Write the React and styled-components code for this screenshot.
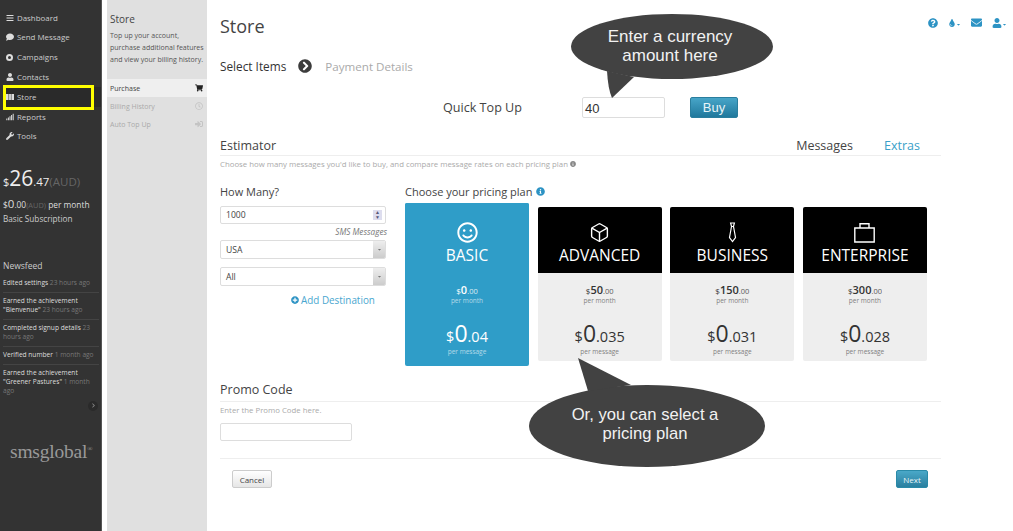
import React from "react";
import styled, { createGlobalStyle } from "styled-components";
import { FaBars, FaComment, FaUser, FaSignal, FaWrench, FaShoppingCart, FaRegClock, FaSignInAlt, FaQuestionCircle, FaTint, FaEnvelope, FaInfoCircle, FaChevronCircleRight, FaPlusCircle, FaChevronRight, FaCaretDown, FaRegSmile } from "react-icons/fa";
import { Box } from "lucide-react";

const Global = createGlobalStyle`
  html, body { margin: 0; padding: 0; background: #fff; overflow: hidden; }
  body { font-family: "Open Sans", "Liberation Sans", sans-serif; }
  * { box-sizing: border-box; }
`;
const Page = styled.div`display: flex; width: 1013px; height: 531px; overflow: hidden; position: relative;`;
const Sidebar = styled.aside`width: 102px; flex: none; background: #333; border-right: 1px solid #555; color: #ddd; padding: 7.8px 0 0 3px; display: flex; flex-direction: column;`;
const NavList = styled.nav`display: flex; flex-direction: column;`;
const NavRow = styled.div`position: relative; height: 19.8px; display: flex; align-items: center; gap: 3px; padding-left: 3px; font-size: 7.9px; color: #ccc; background: ${p => p.$active ? "#2a2a2a" : "transparent"}; svg { width: 8px; height: 8px; flex: none; color: #ddd; }`;
const Highlight = styled.span`position: absolute; left: 0; top: -2px; width: 91px; height: 25px; border: 3px solid #ff0; pointer-events: none;`;
const Ring = styled.span`width: 7px; height: 7px; margin: 0 1px 0 0; flex: none; border: 2px solid #ddd; border-radius: 50%;`;
const Balance = styled.div`margin-top: 20.2px; color: #eee; font-size: 11px; line-height: 22px; white-space: nowrap; b { font-weight: 400; font-size: 21px; } small { font-size: 11.5px; } em { font-style: normal; font-size: 11.5px; color: #666; }`;
const Monthly = styled.div`font-size: 8.4px; line-height: 14px; margin-top: 4px; color: #ddd; white-space: nowrap; b { font-weight: 400; font-size: 11.5px; } em { font-style: normal; color: #666; font-size: 7.4px; } small { font-size: 7px; }`;
const SubLabel = styled.div`font-size: 8.2px; line-height: 14px; color: #ccc;`;
const FeedTitle = styled.div`font-size: 8.5px; color: #ccc; margin-top: 34px; margin-bottom: 4px;`;
const FeedItem = styled.div`font-size: 6.6px; line-height: 9px; color: #ddd; padding: 3px 0 5.2px; border-bottom: ${p => p.$last ? "none" : "1px solid #444"}; margin-right: 2px; span { color: #777; }`;
const Toggle = styled.div`align-self: flex-end; width: 10px; height: 10px; margin: 0 3px 0 0; border-radius: 50%; background: #2a2a2a; color: #888; display: flex; align-items: center; justify-content: center; svg { width: 5px; height: 5px; }`;
const Logo = styled.div`font-family: "Liberation Serif", serif; color: #999; font-size: 19.5px; margin: 30px 0 0 7px; white-space: nowrap; letter-spacing: -0.2px; sup { font-size: 7px; }`;
const SubNav = styled.aside`width: 100px; margin-left: 5px; flex: none; background: #e0e0e0; padding-top: 13px; display: flex; flex-direction: column;`;
const SubTitle = styled.div`font-size: 10px; color: #444; padding: 0 3px; line-height: 13px;`;
const SubText = styled.p`font-size: 7px; line-height: 12px; color: #555; margin: 4px 0 13px; padding: 0 3px; white-space: nowrap;`;
const SubRow = styled.div`height: 18px; display: flex; align-items: center; justify-content: space-between; padding: 0 4px 0 3px; font-size: 7px; color: ${p => p.$active ? "#444" : "#aaa"}; background: ${p => p.$active ? "#efefef" : "transparent"}; svg { width: 8px; height: 8px; color: ${p => p.$active ? "#222" : "#c4c4c4"}; }`;
const Main = styled.main`flex: 1; padding: 0 6px 0 13px; position: relative;`;
const Header = styled.div`display: flex; justify-content: space-between; align-items: center; height: 26px; margin-top: 13px;`;
const Title = styled.h1`margin: 0; font-weight: 400; font-size: 18px; color: #444;`;
const TopIcons = styled.div`display: flex; align-items: center; gap: 9px; margin-top: -7px; color: #2d93c4;`;
const TopIcon = styled.span`display: flex; align-items: center; margin-right: ${p => p.$mr || 0}px; svg { width: ${p => p.$w}px; height: ${p => p.$w < 11 ? p.$w : 11}px; } svg + svg { width: 5px; height: 5px; margin-top: 3px; }`;
const Body = styled.div`width: 721px;`;
const Steps = styled.div`display: flex; align-items: center; height: 16px; margin-top: 19px; font-size: 11.8px; color: #333; svg { width: 14px; height: 14px; color: #3c3c3c; margin: 0 13px 0 12px; }`;
const Muted = styled.span`color: #aaa; font-size: 11.6px;`;
const TopUp = styled.div`display: flex; align-items: center; height: 21px; margin-top: 23px; padding-left: 223px;`;
const TopUpLabel = styled.div`font-size: 12.6px; color: #444; width: 139px;`;
const TopUpInput = styled.div`width: 83px; height: 21px; border: 1px solid #ddd; border-radius: 2px; font: 13px "Liberation Sans", sans-serif; color: #333; padding: 3px 0 0 2px;`;
const Buy = styled.button`width: 48px; height: 21px; margin-left: 25px; border: 1px solid #2a7e9e; border-radius: 2px; background: linear-gradient(#47a5c8, #20789c); color: #e8f4f8; font: 13px "Liberation Sans", sans-serif; padding: 0;`;
const SectionHead = styled.div`display: flex; justify-content: space-between; align-items: flex-end; border-bottom: 1px solid #eee; height: ${p => p.$h}px; padding-bottom: ${p => p.$pb}px; font-size: 12.5px; color: #444; margin-top: ${p => p.$mt}px;`;
const Tabs = styled.div`display: flex; gap: 31px; padding-right: 21px; font-size: 12.5px;`;
const ExtraTab = styled.span`color: #3a9fc9;`;
const Note = styled.div`font-size: 7.8px; line-height: 10px; margin-top: 3px; color: #aaa; display: flex; align-items: center; gap: 2px; svg { width: 6px; height: 6px; color: #888; }`;
const Estimator = styled.div`display: flex; margin-top: 15px;`;
const LeftCol = styled.div`width: 185px; flex: none;`;
const Label = styled.div`font-size: 11px; color: #444; line-height: 15px; display: flex; align-items: center; gap: 4px; svg { width: 9px; height: 9px; color: #2d93c4; }`;
const Field = styled.div`width: 166px; height: ${p => p.$h}px; border: 1px solid #ddd; border-radius: 2px; font-size: 8.6px; color: #444; padding-left: ${p => p.$pl}px; margin-top: ${p => p.$mt}px; display: flex; align-items: center; justify-content: space-between; overflow: hidden;`;
const Spin = styled.span`width: 9px; height: 10px; margin-right: 3px; background: #dde; color: #557; font-size: 5px; line-height: 5px; text-align: center;`;
const Arrow = styled.span`width: 12px; height: 100%; background: linear-gradient(#eee, #ccc); color: #777; display: flex; align-items: center; justify-content: center; svg { width: 5px; height: 5px; }`;
const Unit = styled.div`width: 167px; text-align: right; font-size: 8.2px; font-style: italic; color: #777; line-height: 10px; margin-top: 3px;`;
const AddDest = styled.div`display: flex; align-items: center; gap: 2px; padding-left: 71px; margin-top: 7px; font-size: 9.9px; color: #49a6cf; svg { width: 8px; height: 8px; color: #2d93c4; }`;
const RightCol = styled.div`flex: 1;`;
const Plans = styled.div`display: flex; align-items: flex-start; gap: 8.67px; margin-top: 4px;`;
const PlanCard = styled.div`width: 124px; flex: none; margin-top: ${p => p.$featured ? 0 : 4}px; height: ${p => p.$featured ? 163 : 154}px; border-radius: 2px; overflow: hidden; text-align: center; background: ${p => p.$featured ? "#2f9dc8" : "#eee"}; color: ${p => p.$featured ? "#fff" : "#333"}; display: flex; flex-direction: column;`;
const PlanHead = styled.div`height: ${p => p.$featured ? 70 : 66}px; flex: none; background: ${p => p.$featured ? "#2f9dc8" : "#000"}; color: #fff; display: flex; flex-direction: column; align-items: center; justify-content: flex-end; font-size: 15.5px; line-height: 20px; padding-bottom: 8px; svg { width: 21px; height: 21px; margin-bottom: 2px; }`;
const PlanMonth = styled.div`margin-top: 11px; font-size: 8px; line-height: 12px; b { font-weight: 600; font-size: 11px; } small { font-size: 7.5px; opacity: .8; }`;
const Per = styled.div`font-size: 6.5px; line-height: 8px; opacity: .6;`;
const Rate = styled.div`margin-top: 17px; font-size: 14.5px; line-height: 22px; b { font-weight: 400; font-size: 23px; }`;
const Promo = styled.div`width: 132px; height: 18px; border: 1px solid #ddd; border-radius: 2px; margin-top: 8px;`;
const Rule = styled.div`border-top: 1px solid #eee; margin-top: 17px;`;
const Actions = styled.div`display: flex; justify-content: space-between; padding: 11px 13px 0 12px;`;
const Cancel = styled.button`width: 40px; height: 18px; padding: 0; border: 1px solid #ccc; border-radius: 2px; background: linear-gradient(#fff, #e6e6e6); font: 8px "Open Sans", sans-serif; color: #444;`;
const Next = styled.button`width: 32px; height: 18px; padding: 0; border: 1px solid #2a8aa8; border-radius: 2px; background: linear-gradient(#4aa8c8, #2a7f9f); font: 8px "Open Sans", sans-serif; color: #e8f4f8;`;
const Callout = styled.div`position: absolute; left: ${p => p.$x}px; top: ${p => p.$y}px; width: ${p => p.$w}px; height: ${p => p.$h}px; svg { position: absolute; inset: 0; }`;
const CalloutText = styled.div`position: absolute; left: ${p => p.$l}px; top: ${p => p.$t}px; width: ${p => p.$tw}px; text-align: center; color: #f2f2f2; font: ${p => p.$fs}px/${p => p.$lh}px "Liberation Sans", sans-serif; white-space: nowrap;`;

const Tie = () => (
  <svg viewBox="0 0 21 21" fill="none" stroke="#fff" strokeWidth="1.2">
    <path d="M8.6 1h3.8l-.9 3.5H9.5zM9.5 4.5l-2 11 3 4 3-4-2-11" />
  </svg>
);
const Case = () => (
  <svg viewBox="0 0 21 21" fill="none" stroke="#fff" strokeWidth="1.4">
    <path d="M.8 6h19.4v14H.8zM6 6V1.8h9V6" />
  </svg>
);
const StoreIcon = () => (
  <svg viewBox="0 0 8 8">
    <path d="M0 1h8v6H0z" fill="#ddd" />
    <path d="M2.7 1v6M5.3 1v6" stroke="#555" strokeWidth=".7" />
  </svg>
);
const nav = [
  [<FaBars />, "Dashboard"], [<FaComment />, "Send Message"], [<Ring />, "Campaigns"], [<FaUser />, "Contacts"],
  [<StoreIcon />, "Store", true], [<FaSignal />, "Reports"], [<FaWrench />, "Tools"],
];
const plans = [
  { name: "BASIC", icon: <FaRegSmile />, month: "0", rate: ".04", featured: true },
  { name: "ADVANCED", icon: <Box strokeWidth={1.6} />, month: "50", rate: ".035" },
  { name: "BUSINESS", icon: <Tie />, month: "150", rate: ".031" },
  { name: "ENTERPRISE", icon: <Case />, month: "300", rate: ".028" },
];

export default function App() {
  return (
    <Page>
      <Global />
      <Sidebar>
        <NavList>
          {nav.map(([icon, label, active]) => (
            <NavRow key={label} $active={active}>{icon}{label}{active && <Highlight />}</NavRow>
          ))}
        </NavList>
        <Balance>$<b>26</b>.<small>47</small><em>(AUD)</em></Balance>
        <Monthly>$<b>0</b>.00<em>(AUD)</em> per month</Monthly>
        <SubLabel>Basic Subscription</SubLabel>
        <FeedTitle>Newsfeed</FeedTitle>
        <FeedItem>Edited settings <span>23 hours ago</span></FeedItem>
        <FeedItem>Earned the achievement "Bienvenue" <span>23 hours ago</span></FeedItem>
        <FeedItem>Completed signup details <span>23 hours ago</span></FeedItem>
        <FeedItem>Verified number <span>1 month ago</span></FeedItem>
        <FeedItem $last>Earned the achievement "Greener Pastures" <span>1 month ago</span></FeedItem>
        <Toggle><FaChevronRight /></Toggle>
        <Logo>smsglobal<sup>®</sup></Logo>
      </Sidebar>
      <SubNav>
        <SubTitle>Store</SubTitle>
        <SubText>Top up your account,<br />purchase additional features<br />and view your billing history.</SubText>
        <SubRow $active>Purchase<FaShoppingCart /></SubRow>
        <SubRow>Billing History<FaRegClock /></SubRow>
        <SubRow>Auto Top Up<FaSignInAlt /></SubRow>
      </SubNav>
      <Main>
        <Header>
          <Title>Store</Title>
          <TopIcons>
            <TopIcon $w={10} $mr={1}><FaQuestionCircle /></TopIcon>
            <TopIcon $w={8}><FaTint /><FaCaretDown /></TopIcon>
            <TopIcon $w={13}><FaEnvelope /></TopIcon>
            <TopIcon $w={10}><FaUser /><FaCaretDown /></TopIcon>
          </TopIcons>
        </Header>
        <Body>
          <Steps>Select Items<FaChevronCircleRight /><Muted>Payment Details</Muted></Steps>
          <TopUp>
            <TopUpLabel>Quick Top Up</TopUpLabel>
            <TopUpInput>40</TopUpInput>
            <Buy>Buy</Buy>
          </TopUp>
          <SectionHead $h={28} $pb={1} $mt={10}>Estimator<Tabs><span>Messages</span><ExtraTab>Extras</ExtraTab></Tabs></SectionHead>
          <Note>Choose how many messages you'd like to buy, and compare message rates on each pricing plan <FaInfoCircle /></Note>
          <Estimator>
            <LeftCol>
              <Label>How Many?</Label>
              <Field $h={18} $pl={5} $mt={7}>1000<Spin>▲<br />▼</Spin></Field>
              <Unit>SMS Messages</Unit>
              <Field $h={19} $pl={5} $mt={3}>USA<Arrow><FaCaretDown /></Arrow></Field>
              <Field $h={19} $pl={5} $mt={8}>All<Arrow><FaCaretDown /></Arrow></Field>
              <AddDest><FaPlusCircle />Add Destination</AddDest>
            </LeftCol>
            <RightCol>
              <Label>Choose your pricing plan <FaInfoCircle /></Label>
              <Plans>
                {plans.map(p => (
                  <PlanCard key={p.name} $featured={p.featured}>
                    <PlanHead $featured={p.featured}>{p.icon}{p.name}</PlanHead>
                    <PlanMonth>$<b>{p.month}</b><small>.00</small></PlanMonth>
                    <Per>per month</Per>
                    <Rate>$<b>0</b>{p.rate}</Rate>
                    <Per>per message</Per>
                  </PlanCard>
                ))}
              </Plans>
            </RightCol>
          </Estimator>
          <SectionHead $h={25} $pb={3} $mt={11}>Promo Code</SectionHead>
          <Note>Enter the Promo Code here.</Note>
          <Promo />
          <Rule />
          <Actions><Cancel>Cancel</Cancel><Next>Next</Next></Actions>
        </Body>
        <Callout $x={364} $y={14} $w={202} $h={85}>
          <svg width="202" height="85" viewBox="0 0 202 85">
            <ellipse cx="101" cy="32.5" rx="101" ry="32.5" fill="#424242" />
            <path d="M36 57 Q37 75 41 84 L63 63 Z" fill="#424242" />
          </svg>
          <CalloutText $l={-2} $t={13} $tw={202} $fs={17} $lh={19}>Enter a currency<br />amount here</CalloutText>
        </Callout>
        <Callout $x={322} $y={358} $w={236} $h={110}>
          <svg width="236" height="110" viewBox="0 0 236 110">
            <ellipse cx="118" cy="68" rx="118" ry="41" fill="#424242" />
            <path d="M49 0 L59 33 L102 27 Z" fill="#424242" />
          </svg>
          <CalloutText $l={-2} $t={48} $tw={236} $fs={16.6} $lh={18.5}>Or, you can select a<br />pricing plan</CalloutText>
        </Callout>
      </Main>
    </Page>
  );
}
